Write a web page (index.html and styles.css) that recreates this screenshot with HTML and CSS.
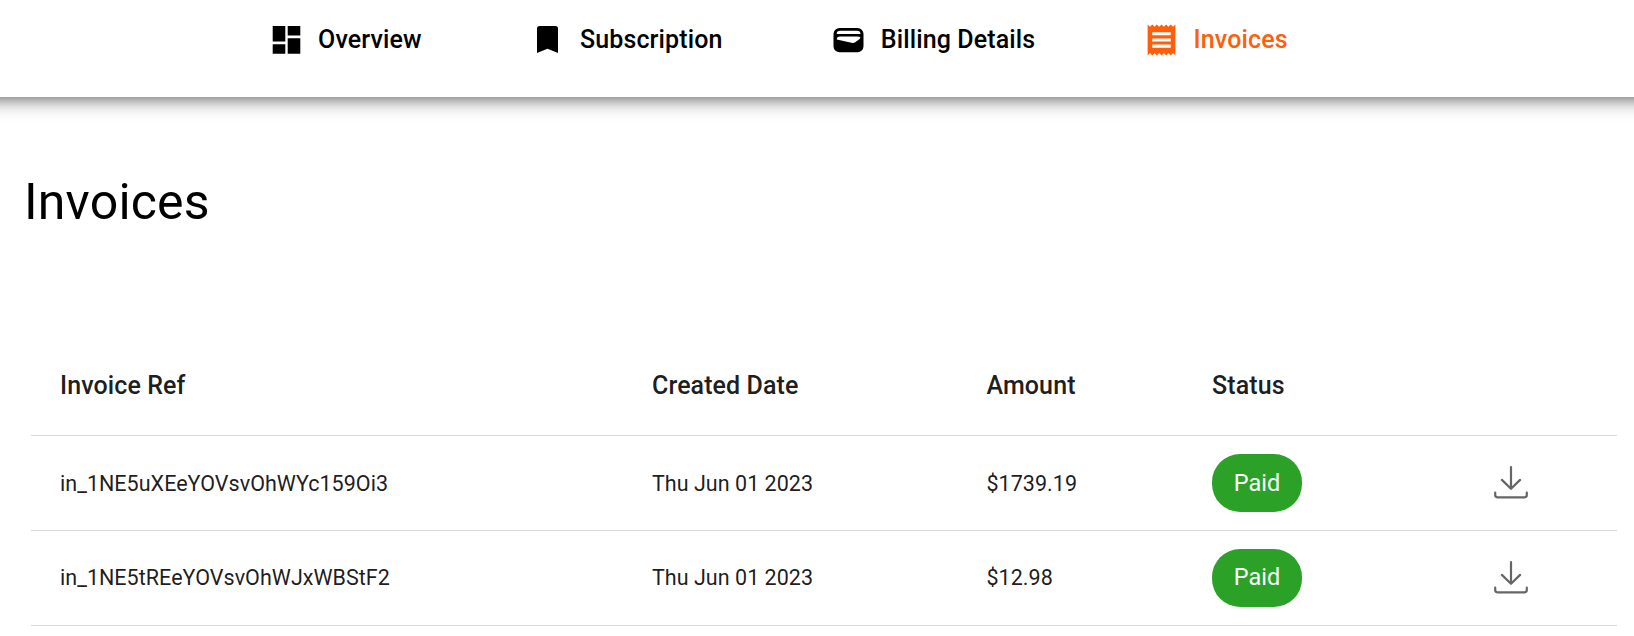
FILE: index.html
```html
<!DOCTYPE html>
<html lang="en">
<head>
<meta charset="utf-8">
<title>Invoices</title>
<link rel="stylesheet" href="styles.css">
</head>
<body>
<nav class="nav">
  <a class="nav-item">
    <svg class="nav-icon" viewBox="0 0 37 37"><path d="M4.700 5h12.600v15.400H4.700zM19.700 5h12.600v9.400H19.700zM4.700 23.200h12.600v9.500H4.700zM19.700 17.200h12.600v15.500H19.700z"/></svg>
    <span class="nav-label">Overview</span>
  </a>
  <a class="nav-item">
    <svg class="nav-icon" viewBox="0 0 37 37"><path d="M7 32.100V7.500a2.600 2.600 0 0 1 2.600-2.600h15.800A2.600 2.600 0 0 1 28 7.500v24.600l-10.500-4.400z"/></svg>
    <span class="nav-label">Subscription</span>
  </a>
  <a class="nav-item">
    <svg class="nav-icon" viewBox="0 0 37 37"><path fill-rule="evenodd" d="M9.500 7h18a6 6 0 0 1 6 6v12.200a6 6 0 0 1-6 6h-18a6 6 0 0 1-6-6V13a6 6 0 0 1 6-6zM6.700 13.100h23.800q0-3.300-3.600-3.300H10.300q-3.600 0-3.600 3.300zM6.800 18.400l15.700 3.500q1.500.2 2.700-.7l3.800-2.800q1.500-1 1.300-2.200-.4-.6-2.800-.6H10q-3.200 0-3.200 2.800z"/></svg>
    <span class="nav-label">Billing Details</span>
  </a>
  <a class="nav-item nav-item-active">
    <svg class="nav-icon" viewBox="0 0 24 24"><path d="M18 17.300H6v-2h12v2zm0-4H6v-2h12v2zm0-4H6v-2h12v2zM3 22.300l1.500-1.500L6 22.300l1.500-1.500L9 22.300l1.500-1.500L12 22.300l1.500-1.500L15 22.300l1.500-1.500L18 22.300l1.500-1.500L21 22.300V2.300l-1.500 1.500L18 2.300l-1.500 1.500L15 2.300l-1.500 1.500L12 2.300l-1.500 1.500L9 2.300 7.500 3.800 6 2.300 4.500 3.800 3 2.300v20z"/></svg>
    <span class="nav-label">Invoices</span>
  </a>
</nav>
<main class="content">
  <h1 class="title">Invoices</h1>
  <div class="table">
    <div class="row row-head">
      <span>Invoice Ref</span><span>Created Date</span><span>Amount</span><span>Status</span><span></span>
    </div>
    <div class="row">
      <span>in_1NE5uXEeYOVsvOhWYc159Oi3</span><span>Thu Jun 01 2023</span><span>$1739.19</span>
      <span class="badge">Paid</span>
      <svg class="download" viewBox="0 0 36 36"><path d="M18 2v21.500M8.900 14.900l9.100 8.900 9.100-8.900M2.200 27.500v2.600q0 2.200 2.200 2.200h27.200q2.200 0 2.200-2.200v-2.600"/></svg>
    </div>
    <div class="row row-last">
      <span class="cell">in_1NE5tREeYOVsvOhWJxWBStF2</span><span class="cell">Thu Jun 01 2023</span><span class="cell">$12.98</span>
      <span class="badge">Paid</span>
      <svg class="download" viewBox="0 0 36 36"><path d="M18 2v21.500M8.900 14.900l9.100 8.900 9.100-8.900M2.200 27.500v2.600q0 2.200 2.200 2.200h27.200q2.200 0 2.200-2.200v-2.600"/></svg>
    </div>
  </div>
</main>
</body>
</html>
```
FILE: styles.css
```css
* { box-sizing: border-box; }

body {
  margin: 0;
  overflow-x: hidden;
  background: #fff;
  color: #000;
  font-family: Roboto, "Liberation Sans", sans-serif;
}

.nav {
  display: flex;
  gap: 107.8px;
  height: 97px;
  margin: 0 -30px;
  padding: 21px 0 0 297.6px;
  box-shadow: 0 0 19px rgba(0, 0, 0, 0.75);
}

.nav-item {
  display: flex;
  align-items: center;
  gap: 13.5px;
  height: 37px;
}

.nav-item-active { color: #ff5f0a; }

.nav-icon {
  width: 37px;
  height: 37px;
  fill: currentColor;
}

.nav-label {
  font-size: 25px;
  font-weight: 500;
  letter-spacing: 0.12px;
  line-height: 37px;
  white-space: nowrap;
}

.content { padding: 75px 17px 0 24px; }

.title {
  margin: 0;
  font-size: 50px;
  font-weight: 400;
  letter-spacing: 0.2px;
  line-height: 60px;
}

.table {
  margin: 104px 0 0 7px;
  color: rgba(0, 0, 0, 0.9);
  font-size: 21.5px;
  letter-spacing: 0.03px;
}

.row {
  display: grid;
  grid-template-columns: 592px 334.500px 225.500px 280.500px 36px;
  align-items: center;
  height: 95px;
  padding-left: 29px;
  border-bottom: 1px solid #d9d9d9;
  white-space: nowrap;
}

.row-head {
  height: 100px;
  font-size: 25px;
  font-weight: 500;
  letter-spacing: 0.1px;
}

.row-last .cell { padding-bottom: 2px; }

.badge {
  justify-self: start;
  width: 90px;
  height: 58px;
  border-radius: 28px;
  background: #2ba227;
  color: #fff;
  font-size: 23.5px;
  line-height: 58px;
  text-align: center;
}

.row-last .badge { line-height: 56px; }

.download {
  width: 36px;
  height: 36px;
  fill: none;
  stroke: #666;
  stroke-width: 2.2;
  stroke-linecap: round;
  stroke-linejoin: round;
}
```
